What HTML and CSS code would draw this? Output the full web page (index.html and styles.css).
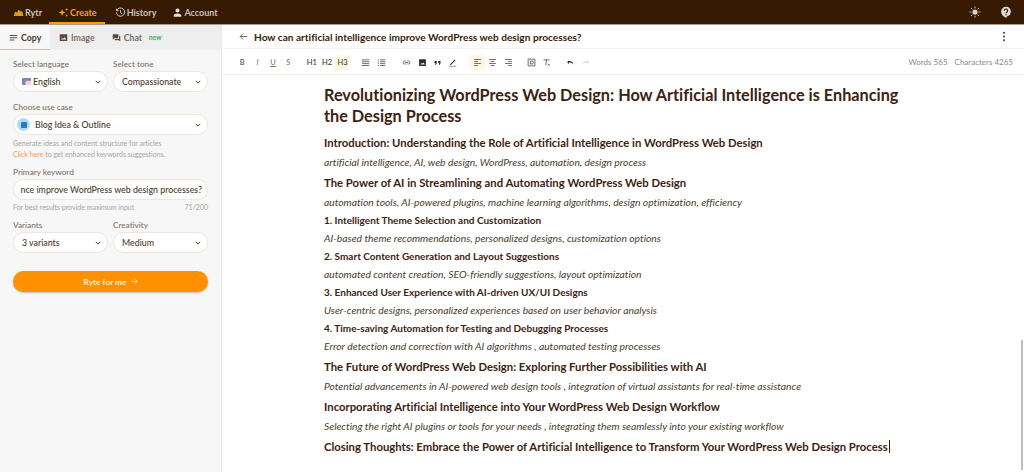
FILE: index.html
```html
<!DOCTYPE html>
<html lang="en">
<head>
<meta charset="utf-8">
<title>Rytr</title>
<link rel="stylesheet" href="styles.css">
</head>
<body>
<header class="topbar">
  <nav class="topnav">
    <a class="nav-item"><svg class="ic" viewBox="0 0 16 16"><path fill="#d99a1c" d="M1 13l2-6 3 1 2-4 3 2 3 1 1 6z"/></svg>Rytr</a>
    <a class="nav-item active"><svg class="ic" viewBox="0 0 16 16"><path fill="#ff9d0a" d="M6 3l1.300 3.700L11 8 7.300 9.300 6 13 4.700 9.300 1 8l3.700-1.300zM12.500 1l.6 1.900 1.900.6-1.900.6-.6 1.900-.6-1.900-1.900-.6 1.900-.6zM12.500 10.500l.6 1.400 1.400.6-1.400.6-.6 1.400-.6-1.400-1.400-.6 1.400-.6z"/></svg>Create</a>
    <a class="nav-item"><svg class="ic" viewBox="0 0 16 16"><path fill="none" stroke="#d8d2cc" stroke-width="1.400" d="M2.500 5A6 6 0 1 1 2 8M2.300 2.500V5.300H5M8 4.800V8.300L10.500 9.800"/></svg>History</a>
    <a class="nav-item"><svg class="ic" viewBox="0 0 16 16"><path fill="#e6e1dc" d="M8 2a3 3 0 1 1 0 6 3 3 0 0 1 0-6zM2.500 14v-1.500C2.500 10.500 5.500 9.500 8 9.500s5.500 1 5.500 3V14z"/></svg>Account</a>
  </nav>
  <div class="top-actions">
    <svg class="ic-lg" viewBox="0 0 16 16"><circle cx="8" cy="8" r="3.500" fill="#d8d2cc"/><path stroke="#d8d2cc" stroke-width="1.200" d="M8 0.500v2.500M8 13v2.500M0.500 8H3M13 8h2.500M2.700 2.700l1.800 1.800M11.500 11.500l1.800 1.800M2.700 13.300l1.800-1.800M11.500 4.500l1.800-1.800"/></svg>
    <svg class="ic-lg" viewBox="0 0 16 16"><path fill="#e0dbd6" d="M8 1a6.500 6.500 0 0 1 1 12.900V15.500C5 14.500 1.500 11.500 1.500 7.500A6.500 6.500 0 0 1 8 1z"/><path fill="none" stroke="#361a04" stroke-width="1.500" d="M5.800 6.200a2.200 2.200 0 1 1 3.300 2C8.300 8.700 8 9 8 9.800"/><circle cx="8" cy="11.500" r="0.900" fill="#361a04"/></svg>
  </div>
</header>
<div class="app">
  <aside class="sidebar">
    <div class="tabs">
      <a class="tab active"><svg class="ic-s" viewBox="0 0 12 12"><path fill="#5a4a3c" d="M1 2.500h10v1.500H1zM1 5.500h10V7H1zM1 8.500h6V10H1z"/></svg>Copy</a>
      <a class="tab"><svg class="ic-s" viewBox="0 0 12 12"><path fill="#5a4a3c" d="M1 1.500h10v9H1zM2.500 8.500h7L7.500 5.500 5.500 7.500 4.500 6.500z" fill-rule="evenodd"/></svg>Image</a>
      <a class="tab"><svg class="ic-s" viewBox="0 0 12 12"><path fill="#5a4a3c" d="M1 1.500h7.500V7H3L1 9zM9.500 3.500H11V11L9 9.500H3.500V8h6z"/></svg>Chat<span class="new">new</span></a>
    </div>
    <form class="form">
      <div class="row">
        <div class="field"><span class="label">Select language</span><div class="select"><span class="flag"></span>English<svg class="chev" viewBox="0 0 8 5"><path d="M1 1l3 3 3-3"/></svg></div></div>
        <div class="field"><span class="label">Select tone</span><div class="select">Compassionate<svg class="chev" viewBox="0 0 8 5"><path d="M1 1l3 3 3-3"/></svg></div></div>
      </div>
      <div class="field use-case"><span class="label">Choose use case</span>
        <div class="select usecase"><span class="uc-icon"><i></i></span>Blog Idea &amp; Outline<svg class="chev" viewBox="0 0 8 5"><path d="M1 1l3 3 3-3"/></svg></div>
        <p class="hint first">Generate ideas and content structure for articles</p>
        <p class="hint"><span class="link">Click here</span> to get enhanced keywords suggestions.</p>
      </div>
      <div class="field keyword"><span class="label">Primary keyword</span>
        <div class="select input"><span>nce improve WordPress web design processes?</span></div>
        <p class="hint split"><span>For best results provide maximum input</span><span>71/200</span></p>
      </div>
      <div class="row variants">
        <div class="field"><span class="label">Variants</span><div class="select">3 variants<svg class="chev" viewBox="0 0 8 5"><path d="M1 1l3 3 3-3"/></svg></div></div>
        <div class="field"><span class="label">Creativity</span><div class="select">Medium<svg class="chev" viewBox="0 0 8 5"><path d="M1 1l3 3 3-3"/></svg></div></div>
      </div>
      <button class="ryte" type="button">Ryte for me <svg class="arrow" viewBox="0 0 10 10"><path d="M1 5h8M5.500 1.500L9 5 5.500 8.500"/></svg></button>
    </form>
  </aside>
  <main class="main">
    <div class="doc-head">
      <svg class="back" viewBox="0 0 12 12"><path d="M11 6H1.500M5.500 2L1.500 6l4 4"/></svg>
      <h2 class="doc-title">How can artificial intelligence improve WordPress web design processes?</h2>
      <svg class="more" viewBox="0 0 4 12"><circle cx="2" cy="2" r="1.100"/><circle cx="2" cy="6" r="1.100"/><circle cx="2" cy="10" r="1.100"/></svg>
    </div>
    <div class="toolbar">
      <div class="tools">
        <span class="t b">B</span><span class="t i">I</span><span class="t u">U</span><span class="t s">S</span>
        <span class="t h gap">H1</span><span class="t h">H2</span><span class="t h on">H3</span>
        <span class="t gap"><svg class="ti" viewBox="0 0 12 12"><path d="M1 2.500h10M1 5h10M1 7.500h10M1 10h10"/></svg></span>
        <span class="t"><svg class="ti" viewBox="0 0 12 12"><path d="M4 2.500h7M4 5h7M4 7.500h7M4 10h7M1 2.500h1.500M1 5h1.500M1 7.500h1.500M1 10h1.500"/></svg></span>
        <span class="t gap-l"><svg class="ti" viewBox="0 0 12 12"><path d="M5 4H3.500a2 2 0 0 0 0 4H5M7 4h1.500a2 2 0 0 1 0 4H7M4 6h4"/></svg></span>
        <span class="t"><svg class="ti fill" viewBox="0 0 12 12"><path d="M1.500 1.500h9v9h-9zM3 8.500h6L7.500 6 6 7.500 5 6.500z" fill-rule="evenodd"/></svg></span>
        <span class="t"><svg class="ti fill" viewBox="0 0 12 12"><path d="M2 4h3v3L4 9H2.500L3.500 7H2zM7 4h3v3L9 9H7.500L8.500 7H7z"/></svg></span>
        <span class="t"><svg class="ti pen" viewBox="0 0 12 12"><path d="M2.500 8.500L9 2l1 1-6.500 6.500z" fill="#2f2a25" stroke="none"/><path d="M1 11h10" stroke="#8a8178"/></svg></span>
        <span class="t gap-m on"><svg class="ti" viewBox="0 0 12 12"><path d="M1.500 2h9M1.500 4.700h5M1.500 7.300h9M1.500 10h5"/></svg></span>
        <span class="t"><svg class="ti" viewBox="0 0 12 12"><path d="M1.500 2h9M3.500 4.700h5M1.500 7.300h9M3.500 10h5"/></svg></span>
        <span class="t"><svg class="ti" viewBox="0 0 12 12"><path d="M1.500 2h9M5.500 4.700h5M1.500 7.300h9M5.500 10h5"/></svg></span>
        <span class="t gap"><svg class="ti" viewBox="0 0 12 12"><path d="M1.500 1.500h9v9h-9zM4.500 4h2a2 2 0 0 1 0 4h-2z"/></svg></span>
        <span class="t"><svg class="ti" viewBox="0 0 12 12"><path d="M2 2.500h8M6 2.500L5 9.500M8 8l2 2M10 8l-2 2"/></svg></span>
        <span class="t gap"><svg class="ti" viewBox="0 0 12 12"><path d="M4 3L1.500 5.500 4 8V6c2.500 0 4.500.5 6 3-.3-3-2.500-5-6-5z" fill="#2f2a25" stroke="none"/></svg></span>
        <span class="t"><svg class="ti" viewBox="0 0 12 12"><path d="M8 3l2.500 2.500L8 8V6C5.500 6 3.500 6.500 2 9c.3-3 2.500-5 6-5z" fill="#d8d8d8" stroke="none"/></svg></span>
      </div>
      <div class="counts"><span>Words 565</span><span>Characters 4265</span></div>
    </div>
    <article class="editor">
      <h1>Revolutionizing WordPress Web Design: How Artificial Intelligence is Enhancing the Design Process</h1>
      <h2>Introduction: Understanding the Role of Artificial Intelligence in WordPress Web Design</h2>
      <p>artificial intelligence, AI, web design, WordPress, automation, design process</p>
      <h2>The Power of AI in Streamlining and Automating WordPress Web Design</h2>
      <p>automation tools, AI-powered plugins, machine learning algorithms, design optimization, efficiency</p>
      <h3>1. Intelligent Theme Selection and Customization</h3>
      <p>AI-based theme recommendations, personalized designs, customization options</p>
      <h3>2. Smart Content Generation and Layout Suggestions</h3>
      <p>automated content creation, SEO-friendly suggestions, layout optimization</p>
      <h3>3. Enhanced User Experience with AI-driven UX/UI Designs</h3>
      <p>User-centric designs, personalized experiences based on user behavior analysis</p>
      <h3>4. Time-saving Automation for Testing and Debugging Processes</h3>
      <p>Error detection and correction with AI algorithms , automated testing processes</p>
      <h2>The Future of WordPress Web Design: Exploring Further Possibilities with AI</h2>
      <p>Potential advancements in AI-powered web design tools , integration of virtual assistants for real-time assistance</p>
      <h2>Incorporating Artificial Intelligence into Your WordPress Web Design Workflow</h2>
      <p>Selecting the right AI plugins or tools for your needs , integrating them seamlessly into your existing workflow</p>
      <h2 class="last">Closing Thoughts: Embrace the Power of Artificial Intelligence to Transform Your WordPress Web Design Process<span class="caret"></span></h2>
    </article>
    <div class="scrollbar"></div>
  </main>
</div>
</body>
</html>
```

FILE: styles.css
```css
* { box-sizing: border-box; }
html, body { margin: 0; height: 100%; }
body {
  height: 472px;
  overflow: hidden;
  font-family: "Lato", "Open Sans", sans-serif;
  font-variant-ligatures: none;
  color: #361a04;
  background: #fff;
  display: flex;
  flex-direction: column;
}
svg { display: block; flex: none; }

.topbar {
  height: 25px;
  flex: none;
  background: #361a04;
  border-bottom: 1px solid #a89a8e;
  display: flex;
  justify-content: space-between;
  align-items: center;
  padding-right: 12px;
}
.topnav { display: flex; height: 100%; padding-left: 13px; }
.nav-item {
  display: flex;
  align-items: center;
  gap: 1px;
  height: 24px;
  font-size: 9px;
  font-weight: 700;
  color: #c9c1ba;
  margin-right: 16px;
}
.nav-item.active {
  color: #ff9d0a;
  box-shadow: 0 -2px 0 #ff9d0a inset;
  margin: 0 10px 0 -9px;
  padding: 0 8px 0 9px;
}
.ic { width: 11px; height: 11px; }
.top-actions { display: flex; gap: 19px; align-items: center; }
.ic-lg { width: 12px; height: 12px; }

.app { flex: 1; display: flex; min-height: 0; }

.sidebar {
  width: 222px;
  flex: none;
  background: #f7f7f7;
  border-right: 1px solid #e9e9e9;
}
.tabs {
  height: 25px;
  background: #eeeeee;
  display: flex;
  align-items: center;
}
.tab {
  display: flex;
  align-items: center;
  gap: 3px;
  height: 25px;
  font-size: 8.800px;
  font-weight: 700;
  color: #7c6f64;
  margin-right: 17px;
}
.tab.active {
  color: #4a3a2c;
  width: 50px;
  margin-right: 9px;
  padding-left: 9px;
  border-bottom: 1px solid #c9c0b6;
  background: #f7f7f7;
}
.ic-s { width: 9px; height: 9px; }
.new {
  font-size: 6.500px;
  color: #5d9a6a;
  background: #dff2e2;
  border-radius: 3px;
  padding: 0 2px;
  margin-left: 2px;
}

.form { padding: 8px 13px 0 13px; display: flex; flex-direction: column; }
.row { display: flex; gap: 5px; }
.field { flex: 1; min-width: 0; display: flex; flex-direction: column; }
.label { font-size: 8.200px; line-height: 12px; color: #7c6f64; font-weight: 500; margin-bottom: 1px; }
.select {
  height: 21px;
  background: #fff;
  border: 1px solid #ece6dd;
  border-radius: 11px;
  display: flex;
  align-items: center;
  padding: 0 6px 0 8px;
  font-size: 8.800px;
  font-weight: 500;
  color: #4a3a2c;
  white-space: nowrap;
}
.chev {
  width: 6px;
  height: 4px;
  margin-left: auto;
  fill: none;
  stroke: #4a3a2c;
  stroke-width: 1.300;
}
.flag {
  width: 9px;
  height: 7px;
  margin-right: 2px;
  background: linear-gradient(#e8868c 0 50%, #f4d3d5 50% 100%);
  box-shadow: inset 4px 3px 0 -0.500px #7b87b8;
  border-radius: 1px;
}
.use-case { margin-top: 9px; flex: none; }
.usecase { padding-left: 3px; }
.uc-icon {
  width: 13px;
  height: 13px;
  border-radius: 50%;
  background: #a8dcf7;
  display: flex;
  align-items: center;
  justify-content: center;
  margin-right: 5px;
}
.uc-icon i { width: 6px; height: 6px; background: #2a78b8; border-radius: 1px; }
.hint { margin: 0; font-size: 7px; line-height: 11px; color: #a9a39c; }
.hint.first { margin-top: 3px; }
.link { color: #f59a4e; }
.keyword { margin-top: 6px; flex: none; }
.input { overflow: hidden; justify-content: flex-end; padding: 0 5px; }
.split { display: flex; justify-content: space-between; margin-top: 2px; }
.variants { margin-top: 6px; }
.ryte {
  margin-top: 18px;
  height: 21px;
  width: 100%;
  border: 0;
  border-radius: 11px;
  background: #ff9100;
  color: #fdeedd;
  font: 700 8.300px "Lato", sans-serif;
  display: flex;
  align-items: center;
  justify-content: center;
  gap: 4px;
  box-shadow: 0 1px 2px rgba(0,0,0,.25);
}
.arrow { width: 7px; height: 7px; fill: none; stroke: #fdeedd; stroke-width: 1.200; }

.main { flex: 1; min-width: 0; position: relative; display: flex; flex-direction: column; }
.doc-head {
  height: 24px;
  flex: none;
  display: flex;
  align-items: center;
  padding: 0 18px 0 17px;
  border-bottom: 1px solid #f3f3f3;
}
.back { width: 9px; height: 9px; fill: none; stroke: #6b5c50; stroke-width: 1.200; margin-right: 6px; }
.doc-title { margin: 0; font-size: 10.150px; font-weight: 700; color: #361a04; flex: 1; }
.more { width: 4px; height: 11px; fill: #4a3a2c; }
.toolbar {
  height: 26px;
  flex: none;
  display: flex;
  align-items: center;
  justify-content: space-between;
  padding: 1px 11px 0 12.500px;
  border-bottom: 1px solid #f0efe8;
}
.tools { display: flex; align-items: center; }
.t {
  width: 15.400px;
  height: 15px;
  display: flex;
  align-items: center;
  justify-content: center;
  font-size: 7.500px;
  color: #7a6656;
  border-radius: 2px;
}
.t.gap { margin-left: 8px; }
.t.gap-l { margin-left: 10px; }
.t.gap-m { margin-left: 9px; }
.t.b { font-weight: 700; }
.t.i { font-style: italic; }
.t.u { text-decoration: underline; }
.t.h { font-weight: 500; color: #4a3a2c; }
.on { background: #fff6e3; }
.ti { width: 9px; height: 9px; fill: none; stroke: #5a4f46; stroke-width: 1.100; }
.ti.fill { fill: #2f2a25; stroke: none; }
.counts { display: flex; gap: 7px; font-size: 8px; color: #8d8983; }

.editor { flex: 1; padding: 9px 110px 0 102px; min-height: 0; }
.editor h1 { margin: 0 0 7px; font-size: 16.250px; line-height: 21px; font-weight: 700; color: #3d2210; }
.editor h2 { margin: 2px 0 0; font-size: 11.300px; line-height: 20px; font-weight: 700; color: #3d2210; white-space: nowrap; }
.editor h3 { margin: 0; font-size: 10px; line-height: 18px; font-weight: 700; color: #3d2210; }
.editor p { margin: 0; font-size: 10.300px; line-height: 18px; font-style: italic; color: #4a3a2c; white-space: nowrap; }
.caret { display: inline-block; width: 1px; height: 13px; background: #361a04; margin-left: 1px; vertical-align: -2px; }
.scrollbar { position: absolute; right: 1px; top: 315px; bottom: 2px; width: 2px; background: #bdbdbd; }
```
